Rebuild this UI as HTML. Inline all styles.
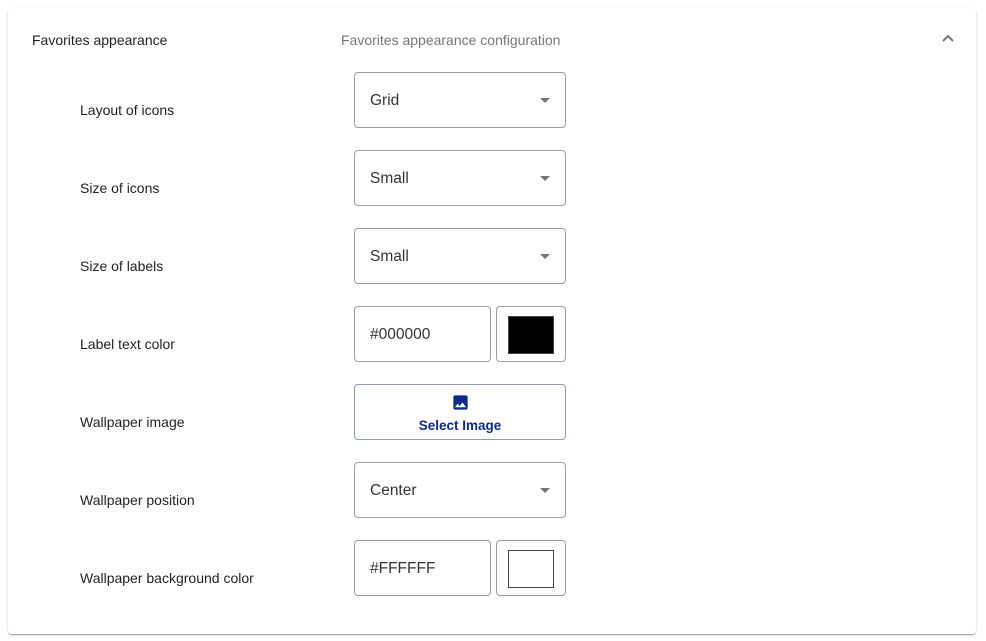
<!DOCTYPE html>
<html><head><style>
body{margin:0;background:#fff;font-family:"Liberation Sans",Roboto,sans-serif;width:986px;height:641px;position:relative;overflow:hidden}
.card{position:absolute;left:8px;top:8px;width:968px;height:626px;background:#fff;border-radius:4px;box-shadow:0 2px 1px -1px rgba(0,0,0,.2),0 1px 1px rgba(0,0,0,.14),0 1px 3px rgba(0,0,0,.12)}
.t{position:absolute;font-size:14px;color:rgba(0,0,0,.87)}
.sub{color:rgba(0,0,0,.54)}
.box{position:absolute;box-sizing:border-box;border:1px solid rgba(0,0,0,.38);border-radius:4px;background:#fff;font-size:15.5px;color:rgba(0,0,0,.8);height:56px}
.box span{position:absolute;left:15px;top:19px}
.arr{position:absolute;right:15px;top:25px;width:0;height:0;border-left:5px solid transparent;border-right:5px solid transparent;border-top:5px solid rgba(0,0,0,.54)}
.sw{position:absolute;left:11px;top:9px;width:46px;height:38px;box-sizing:border-box;border:1px solid #444}
</style></head><body>
<div class="card"></div>
<div class="t" style="left:32px;top:32px;">Favorites appearance</div>
<div class="t sub" style="left:341px;top:32px;">Favorites appearance configuration</div>
<svg style="position:absolute;left:940px;top:32px" width="16" height="12"><path d="M3 9 L8 4 L13 9" stroke="rgba(0,0,0,.54)" stroke-width="2" fill="none"/></svg>

<div class="t" style="left:80px;top:102px">Layout of icons</div>
<div class="box" style="left:354px;top:72px;width:212px"><span>Grid</span><div class="arr"></div></div>

<div class="t" style="left:80px;top:180px">Size of icons</div>
<div class="box" style="left:354px;top:150px;width:212px"><span>Small</span><div class="arr"></div></div>

<div class="t" style="left:80px;top:258px">Size of labels</div>
<div class="box" style="left:354px;top:228px;width:212px"><span>Small</span><div class="arr"></div></div>

<div class="t" style="left:80px;top:336px">Label text color</div>
<div class="box" style="left:354px;top:306px;width:137px"><span>#000000</span></div>
<div class="box" style="left:496px;top:306px;width:70px"><div class="sw" style="background:#000"></div></div>

<div class="t" style="left:80px;top:414px">Wallpaper image</div>
<div class="box" style="left:354px;top:384px;width:212px;border-color:#8f97b8">
<svg style="position:absolute;left:96px;top:8px" width="19" height="19" viewBox="0 0 24 24"><path fill="#0d2b8f" d="M21 19V5c0-1.1-.9-2-2-2H5c-1.1 0-2 .9-2 2v14c0 1.1.9 2 2 2h14c1.1 0 2-.9 2-2zM8.5 13.5l2.5 3 3.5-4.5 4.5 6H5l3.5-4.5z"/></svg>
<div style="position:absolute;left:0;right:0;top:33px;text-align:center;font-size:13.5px;font-weight:bold;color:#0d2b8f">Select Image</div>
</div>

<div class="t" style="left:80px;top:492px">Wallpaper position</div>
<div class="box" style="left:354px;top:462px;width:212px"><span>Center</span><div class="arr"></div></div>

<div class="t" style="left:80px;top:570px">Wallpaper background color</div>
<div class="box" style="left:354px;top:540px;width:137px"><span>#FFFFFF</span></div>
<div class="box" style="left:496px;top:540px;width:70px"><div class="sw" style="background:#fff"></div></div>
</body></html>
